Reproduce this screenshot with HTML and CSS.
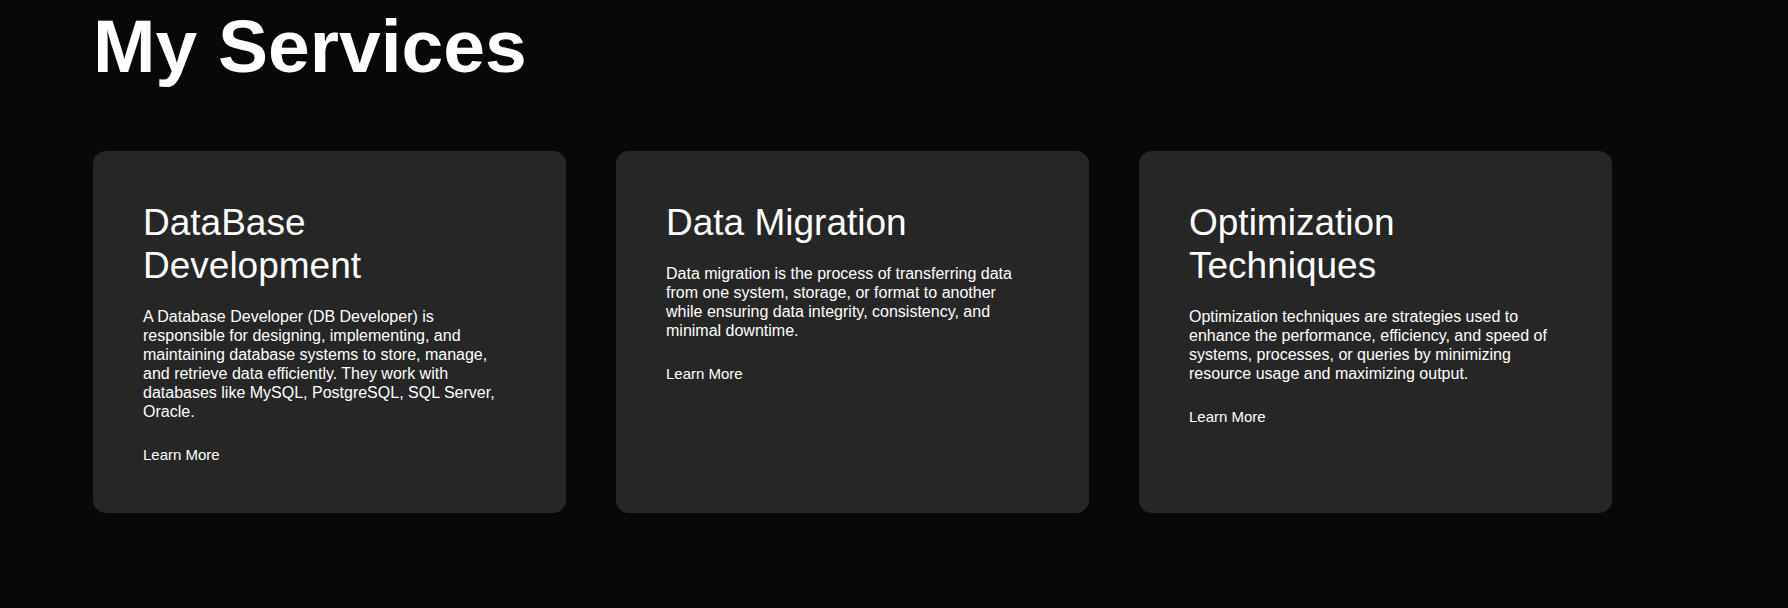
FILE: index.html
```html
<!DOCTYPE html>
<html lang="en">
<head>
<meta charset="utf-8">
<title>My Services</title>
<link rel="stylesheet" href="styles.css">
</head>
<body>
<section class="services">
  <h1 class="services-title">My Services</h1>
  <div class="cards">
    <article class="card">
      <h2 class="card-title">DataBase Development</h2>
      <p class="card-text">A Database Developer (DB Developer) is responsible for designing, implementing, and maintaining database systems to store, manage, and retrieve data efficiently. They work with databases like MySQL, PostgreSQL, SQL Server, Oracle.</p>
      <a class="card-link" href="#">Learn More</a>
    </article>
    <article class="card">
      <h2 class="card-title">Data Migration</h2>
      <p class="card-text">Data migration is the process of transferring data from one system, storage, or format to another while ensuring data integrity, consistency, and minimal downtime.</p>
      <a class="card-link" href="#">Learn More</a>
    </article>
    <article class="card">
      <h2 class="card-title">Optimization Techniques</h2>
      <p class="card-text">Optimization techniques are strategies used to enhance the performance, efficiency, and speed of systems, processes, or queries by minimizing resource usage and maximizing output.</p>
      <a class="card-link" href="#">Learn More</a>
    </article>
  </div>
</section>
</body>
</html>
```

FILE: styles.css
```css
html, body {
  margin: 0;
  padding: 0;
  background: #080808;
  color: #ffffff;
  font-family: "Liberation Sans", Arial, sans-serif;
}

.services {
  padding: 3px 0 0 93px;
}

.services-title {
  margin: 0;
  font-size: 75px;
  font-weight: 700;
  line-height: normal;
}

.cards {
  display: flex;
  align-items: stretch;
  gap: 50px;
  margin-top: 62px;
}

.card {
  width: 473px;
  box-sizing: border-box;
  padding: 50px 50px 50px;
  background: #262626;
  border-radius: 13px;
  display: flex;
  flex-direction: column;
  align-items: flex-start;
}

.card-title {
  margin: 0 0 20px;
  font-size: 37px;
  font-weight: 400;
  line-height: 43px;
}

.card-text {
  max-width: 368px;
  margin: 0 0 25px;
  font-size: 16px;
  line-height: 19px;
}

.card-link {
  color: #ffffff;
  text-decoration: none;
  font-size: 15px;
  line-height: normal;
}
```
